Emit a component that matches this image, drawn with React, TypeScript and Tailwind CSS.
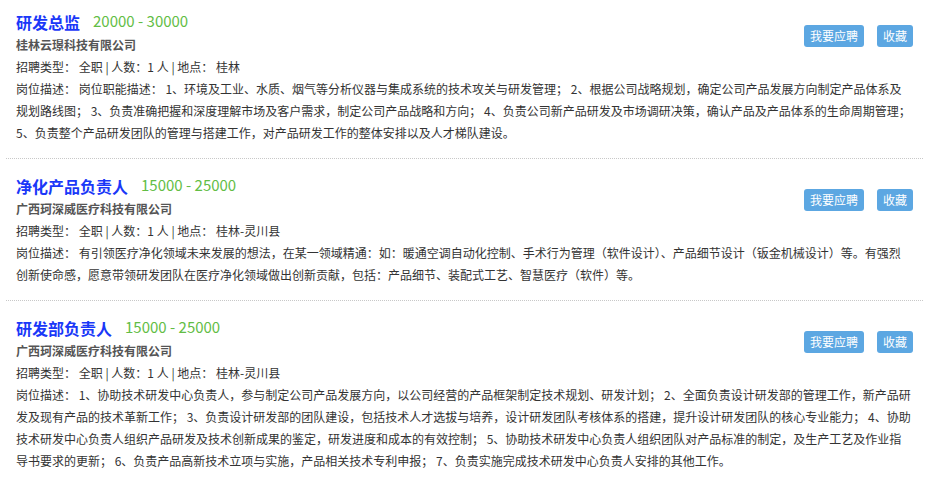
import React from 'react';

interface Job {
  title: string;
  salary: string;
  company: string;
  type: string;
  count: string;
  place: string;
  desc: React.ReactNode;
}

const jobs: Job[] = [
  {
    title: '研发总监',
    salary: '20000 - 30000',
    company: '桂林云璟科技有限公司',
    type: '全职',
    count: '1',
    place: '桂林',
    desc: '岗位职能描述： 1、环境及工业、水质、烟气等分析仪器与集成系统的技术攻关与研发管理； 2、根据公司战略规划，确定公司产品发展方向制定产品体系及规划路线图； 3、负责准确把握和深度理解市场及客户需求，制定公司产品战略和方向； 4、负责公司新产品研发及市场调研决策，确认产品及产品体系的生命周期管理； 5、负责整个产品研发团队的管理与搭建工作，对产品研发工作的整体安排以及人才梯队建设。',
  },
  {
    title: '净化产品负责人',
    salary: '15000 - 25000',
    company: '广西珂深威医疗科技有限公司',
    type: '全职',
    count: '1',
    place: '桂林-灵川县',
    desc: (
      <>
        有引领医疗净化领域未来发展的想法，在某一领域精通：如：暖通空调自动化控制、手术行为管理（软件设计）、产品细节设计（钣金机械设计）等。有强烈
        <span className="whitespace-nowrap">创新</span>
        使命感，愿意带领研发团队在医疗净化领域做出创新贡献，包括：产品细节、装配式工艺、智慧医疗（软件）等。
      </>
    ),
  },
  {
    title: '研发部负责人',
    salary: '15000 - 25000',
    company: '广西珂深威医疗科技有限公司',
    type: '全职',
    count: '1',
    place: '桂林-灵川县',
    desc: '1、协助技术研发中心负责人，参与制定公司产品发展方向，以公司经营的产品框架制定技术规划、研发计划； 2、全面负责设计研发部的管理工作，新产品研发及现有产品的技术革新工作； 3、负责设计研发部的团队建设，包括技术人才选拔与培养，设计研发团队考核体系的搭建，提升设计研发团队的核心专业能力； 4、协助技术研发中心负责人组织产品研发及技术创新成果的鉴定，研发进度和成本的有效控制； 5、协助技术研发中心负责人组织团队对产品标准的制定，及生产工艺及作业指导书要求的更新； 6、负责产品高新技术立项与实施，产品相关技术专利申报； 7、负责实施完成技术研发中心负责人安排的其他工作。',
  },
];

const JobItem: React.FC<{ job: Job; first: boolean }> = ({ job, first }) => {
  return (
    <div className={first ? 'px-[10px] pt-[9px] pb-[14px]' : 'border-t border-dotted border-[#c8c8c8] px-[10px] pt-[14px] pb-[14px]'}>
      <div className="flex justify-between">
        <div>
          <div className="flex items-center h-[25px]">
            <span className="text-[16px] font-bold text-[#1a38f8]">{job.title}</span>
            <span className="ml-[13px] text-[15px] text-[#62bd45]">{job.salary}</span>
          </div>
          <div className="h-[22px] leading-[22px] text-[12px] font-bold text-[#555]">{job.company}</div>
          <div className="h-[22px] leading-[22px] text-[12px] text-[#333]">
            招聘类型： {job.type} | 人数：{job.count} 人 | 地点： {job.place}
          </div>
        </div>
        <div className="flex items-start gap-[13px] mt-[16px]">
          <button className="h-[22px] px-[6px] rounded-[3px] bg-[#5ca7e2] text-white text-[12px] leading-[22px]">我要应聘</button>
          <button className="h-[22px] px-[6px] rounded-[3px] bg-[#5ca7e2] text-white text-[12px] leading-[22px]">收藏</button>
        </div>
      </div>
      <p className="text-[12px] leading-[22px] text-[#333]">岗位描述： {job.desc}</p>
    </div>
  );
};

export default function App() {
  return (
    <div className="w-[937px] h-[479px] bg-white overflow-hidden" style={{ fontFamily: '"Microsoft YaHei", "Noto Sans CJK SC", "Noto Sans", sans-serif' }}>
      <div className="w-[917px] ml-[6px]">
        {jobs.map((job, i) => (
          <JobItem key={i} job={job} first={i === 0} />
        ))}
      </div>
    </div>
  );
}
